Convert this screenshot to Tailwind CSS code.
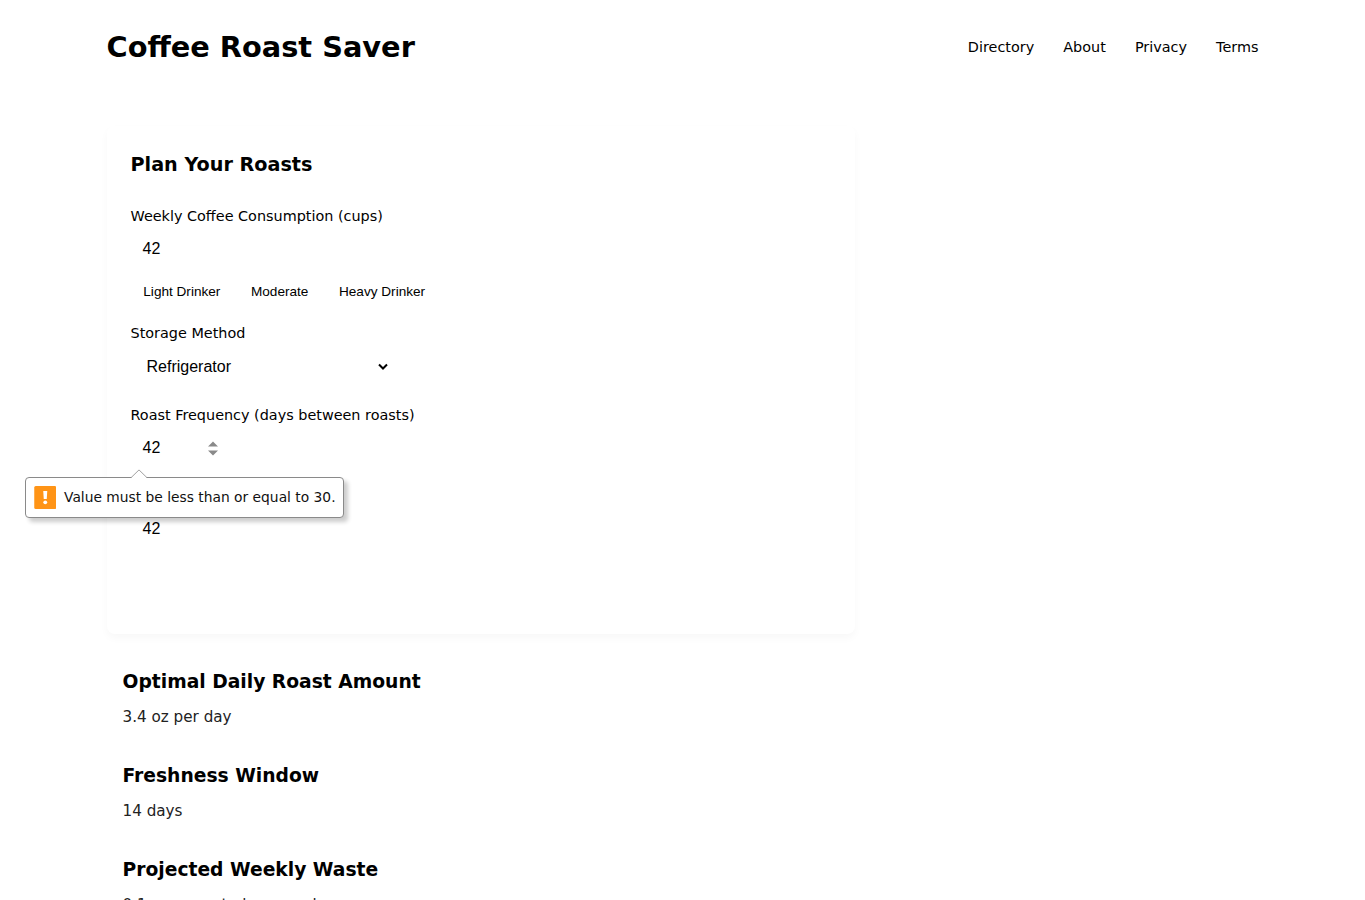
<!DOCTYPE html>
<html lang="en">
<head>
  <meta charset="UTF-8" />
  <title>Coffee Roast Saver</title>
  <script src="https://cdn.jsdelivr.net/npm/@tailwindcss/browser@4"></script>
</head>
<body class="h-[900px] overflow-hidden bg-white text-black font-['DejaVu_Sans',sans-serif]">
  <div class="w-[1152px] mx-auto">
    <header class="flex items-center justify-between h-24">
      <h1 class="text-[28.8px] font-bold">Coffee Roast Saver</h1>
      <nav class="flex gap-[29.1px] text-[14.4px]">
        <a href="#">Directory</a>
        <a href="#">About</a>
        <a href="#">Privacy</a>
        <a href="#">Terms</a>
      </nav>
    </header>

    <main class="pt-[30px]">
      <!-- Planner form -->
      <form class="w-[748.8px] h-[508px] p-6 rounded-lg shadow-[0_4px_8px_rgba(0,0,0,0.03)]">
        <h2 class="text-[19.2px] leading-[30px] font-bold">Plan Your Roasts</h2>

        <label class="block mt-6 text-[14.4px] leading-6">Weekly Coffee Consumption (cups)</label>
        <div class="mt-px h-10 px-3 flex items-center font-['Liberation_Sans',sans-serif]">42</div>
        <div class="h-[46px] px-[12.8px] flex items-center gap-[30.6px] text-[13.6px] font-['Liberation_Sans',sans-serif]">
          <button type="button">Light Drinker</button>
          <button type="button">Moderate</button>
          <button type="button">Heavy Drinker</button>
        </div>

        <label class="block mt-[6px] text-[14.4px] leading-6">Storage Method</label>
        <div class="mt-px w-[273px] h-[42px] px-4 flex items-center justify-between font-['Liberation_Sans',sans-serif]">
          <span>Refrigerator</span>
          <svg class="w-[10px] h-[8px]" viewBox="0 0 10 8" fill="none" stroke="#000" stroke-width="2"><path d="M1 1.5l4 4 4-4" /></svg>
        </div>

        <label class="block mt-[15px] text-[14.4px] leading-6">Roast Frequency (days between roasts)</label>
        <div class="mt-px w-[99.5px] h-10 px-3 flex items-center justify-between font-['Liberation_Sans',sans-serif]">
          <span>42</span>
          <svg class="w-[10px] h-[15px] shrink-0" viewBox="0 0 10 15" fill="#8a8a8a"><path d="M0 5.5L5 0.5l5 5zM0 9.5h10l-5 5z" /></svg>
        </div>

        <div class="mt-[41px] h-10 px-3 flex items-center font-['Liberation_Sans',sans-serif]">42</div>
      </form>

      <!-- Results -->
      <section class="pl-4 pt-[33px]">
        <div class="h-[94px]">
          <h3 class="text-[18.72px] leading-[30px] font-bold">Optimal Daily Roast Amount</h3>
          <p class="mt-2 text-[15.2px] leading-6 text-[#222]">3.4 oz per day</p>
        </div>
        <div class="h-[94px]">
          <h3 class="text-[18.72px] leading-[30px] font-bold">Freshness Window</h3>
          <p class="mt-2 text-[15.2px] leading-6 text-[#222]">14 days</p>
        </div>
        <div class="h-[94px]">
          <h3 class="text-[18.72px] leading-[30px] font-bold">Projected Weekly Waste</h3>
          <p class="mt-2 text-[15.2px] leading-6 text-[#222]">0.1 cups wasted per week</p>
        </div>
      </section>
    </main>
  </div>

  <!-- Validation bubble -->
  <div class="absolute left-[24.5px] top-[477px] w-[319.5px] h-[41px] pl-2 flex items-center gap-2 bg-white border border-[#8a8a8a] rounded-[4px] shadow-[4px_4px_4px_rgba(0,0,0,0.2)]">
    <svg class="absolute left-[105.5px] -top-[9px] w-[16px] h-[10px]" viewBox="0 0 16 10"><path d="M0 9L8 1l8 8v1H0z" fill="#fff" /><path d="M0 8.7L8 0.9l8 7.8" fill="none" stroke="#a0a0a0" /></svg>
    <svg class="w-[22.5px] h-[23px] shrink-0" viewBox="0 0 22 23"><rect width="22" height="23" rx="1.5" fill="#ff9416" /><path d="M9 5h4l-.5 8h-3z" fill="#fff" /><circle cx="11" cy="16.3" r="1.9" fill="#fff" /></svg>
    <span class="text-[13.82px] whitespace-nowrap text-[#111]">Value must be less than or equal to 30.</span>
  </div>
</body>
</html>
